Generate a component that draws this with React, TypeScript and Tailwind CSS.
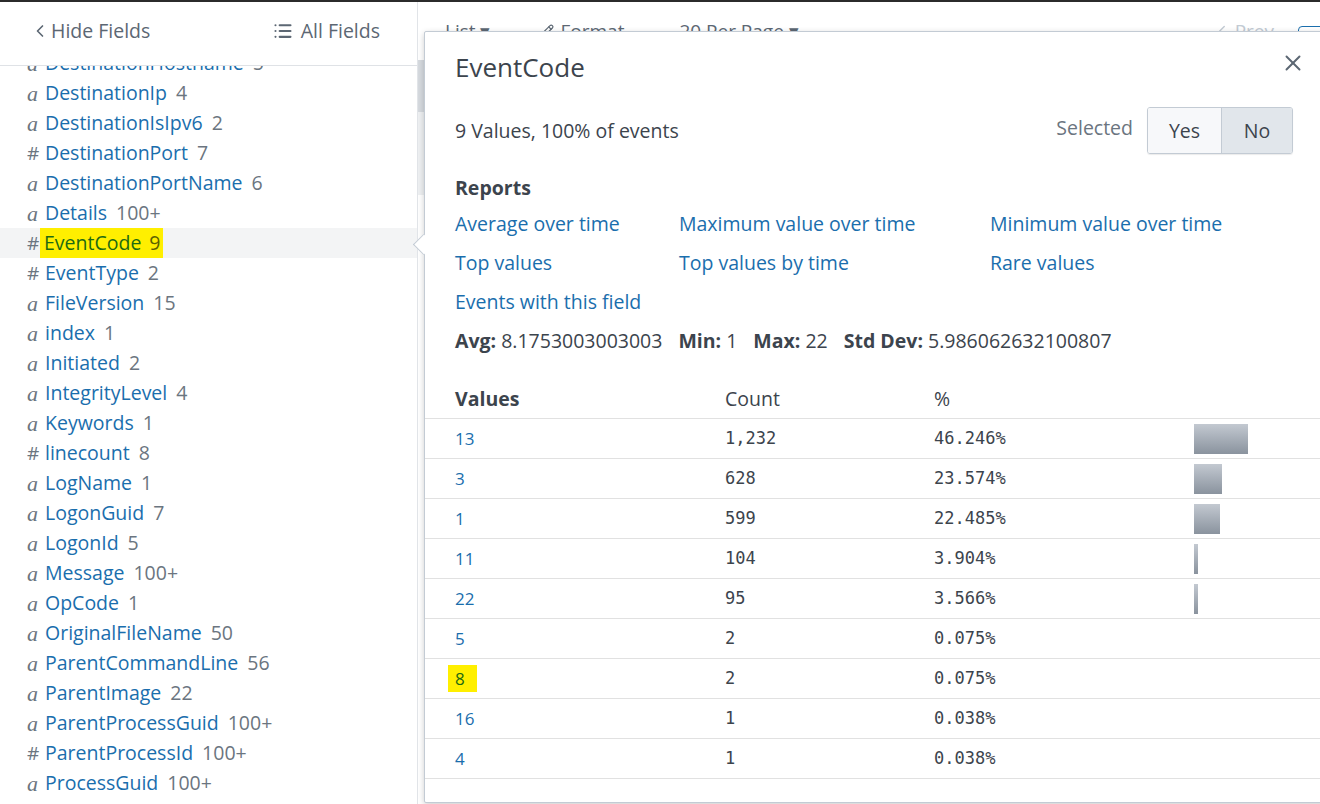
import React from 'react';
import { ChevronLeft, List, X, Pencil } from 'lucide-react';

type Field = { kind: 'a' | '#'; name: string; count: string; active?: boolean };

const fields: Field[] = [
  { kind: 'a', name: 'DestinationHostname', count: '5' },
  { kind: 'a', name: 'DestinationIp', count: '4' },
  { kind: 'a', name: 'DestinationIsIpv6', count: '2' },
  { kind: '#', name: 'DestinationPort', count: '7' },
  { kind: 'a', name: 'DestinationPortName', count: '6' },
  { kind: 'a', name: 'Details', count: '100+' },
  { kind: '#', name: 'EventCode', count: '9', active: true },
  { kind: '#', name: 'EventType', count: '2' },
  { kind: 'a', name: 'FileVersion', count: '15' },
  { kind: 'a', name: 'index', count: '1' },
  { kind: 'a', name: 'Initiated', count: '2' },
  { kind: 'a', name: 'IntegrityLevel', count: '4' },
  { kind: 'a', name: 'Keywords', count: '1' },
  { kind: '#', name: 'linecount', count: '8' },
  { kind: 'a', name: 'LogName', count: '1' },
  { kind: 'a', name: 'LogonGuid', count: '7' },
  { kind: 'a', name: 'LogonId', count: '5' },
  { kind: 'a', name: 'Message', count: '100+' },
  { kind: 'a', name: 'OpCode', count: '1' },
  { kind: 'a', name: 'OriginalFileName', count: '50' },
  { kind: 'a', name: 'ParentCommandLine', count: '56' },
  { kind: 'a', name: 'ParentImage', count: '22' },
  { kind: 'a', name: 'ParentProcessGuid', count: '100+' },
  { kind: '#', name: 'ParentProcessId', count: '100+' },
  { kind: 'a', name: 'ProcessGuid', count: '100+' },
];

const rows = [
  { v: '13', c: '1,232', p: '46.246%', bar: 54 },
  { v: '3', c: '628', p: '23.574%', bar: 28 },
  { v: '1', c: '599', p: '22.485%', bar: 26 },
  { v: '11', c: '104', p: '3.904%', bar: 4 },
  { v: '22', c: '95', p: '3.566%', bar: 4 },
  { v: '5', c: '2', p: '0.075%', bar: 0 },
  { v: '8', c: '2', p: '0.075%', bar: 0, mark: true },
  { v: '16', c: '1', p: '0.038%', bar: 0 },
  { v: '4', c: '1', p: '0.038%', bar: 0 },
];

const FieldRow = ({ f }: { f: Field }) => (
  <div className={`h-[30px] flex items-center pl-[27px] ${f.active ? 'bg-[#f3f4f5]' : ''}`}>
    <span
      className={`w-[18px] text-[#6b7580] ${
        f.kind === 'a' ? "italic font-['Liberation_Serif',serif] text-[22px]" : 'text-[19px]'
      }`}
    >
      {f.kind}
    </span>
    {f.active ? (
      <span className="bg-[#ffef00] pl-[4px] pr-[2px] -ml-[5px] flex items-center">
        <span className="text-[#1d6a12]">{f.name}</span>
        <span className="ml-[8px] text-[#5c6200]">{f.count}</span>
      </span>
    ) : (
      <>
        <span className="text-[#1a6ead]">{f.name}</span>
        <span className="ml-[9px] text-[#6b7580]">{f.count}</span>
      </>
    )}
  </div>
);

export default function App() {
  return (
    <div className="relative w-[1320px] h-[804px] overflow-hidden bg-white border-t-2 border-[#2b2b2b] flex font-['Open_Sans',sans-serif] text-[19.5px] text-[#3c444d]">
      {/* Field sidebar */}
      <div className="w-[418px] shrink-0 border-r border-[#e1e4e8] flex flex-col">
        <div className="h-[64px] shrink-0 border-b border-[#dfe2e6] flex items-center pb-[6px] pl-[30px] pr-[37px] justify-between text-[#5c6773] text-[19.5px] bg-white z-10">
          <span className="flex items-center gap-[1px]">
            <ChevronLeft className="w-[20px] h-[20px]" strokeWidth={2} />
            Hide Fields
          </span>
          <span className="flex items-center gap-[8px]">
            <List className="w-[20px] h-[20px]" strokeWidth={2.5} />
            All Fields
          </span>
        </div>
        <div className="-mt-[18px] text-[19.5px]">
          {fields.map((f) => (
            <FieldRow key={f.name} f={f} />
          ))}
        </div>
      </div>

      {/* Results area behind the popup */}
      <div className="flex-1 relative">
        <div className="h-[58px] flex items-center text-[19px] text-[#5c6773] pl-[27px]">
          <span>List ▾</span>
          <span className="ml-[50px] flex items-center gap-[6px]">
            <Pencil className="w-[14px] h-[14px]" /> Format
          </span>
          <span className="ml-[55px]">20 Per Page ▾</span>
          <span className="ml-auto text-[#c3cbd4] flex items-center gap-[4px]">
            <ChevronLeft className="w-[18px] h-[18px]" /> Prev
          </span>
          <span className="ml-[24px] w-[30px] h-[40px] border border-[#1a6ead] rounded-[4px] self-end -mb-[6px] -mr-[8px]" />
        </div>
        <div className="absolute left-0 top-[58px] w-[6px] h-[52px] bg-[#d6dadf]" />
        <div className="absolute left-0 top-[110px] w-[6px] h-[83px] bg-[#eef0f2]" />
      </div>

      {/* Field summary popup */}
      <div className="absolute left-[424px] top-[29px] w-[910px] h-[772px] bg-white border border-[#c3cbd4] shadow-[0_2px_6px_rgba(0,0,0,0.2)] rounded-[2px]">
        <div className="absolute -left-[9px] top-[205px] w-[15px] h-[15px] bg-white border-l border-b border-[#c3cbd4] rotate-45" />
        <div className="relative pl-[30px] pr-[40px]">
          <div className="flex items-center justify-between pt-[18px]">
            <span className="text-[26px] leading-[34px] text-[#3c444d]">EventCode</span>
            <X className="w-[26px] h-[26px] text-[#5c6773] -mr-[13px] -mt-[8px]" strokeWidth={1.8} />
          </div>
          <div className="flex items-center justify-between mt-[23px]">
            <span>9 Values, 100% of events</span>
            <div className="flex items-center">
              <span className="text-[#6b7580] mr-[14px] -mt-[6px]">Selected</span>
              <div className="flex border border-[#c3cbd4] rounded-[3px] overflow-hidden shadow-[0_1px_1px_rgba(0,0,0,0.08)] h-[47px]">
                <span className="w-[74px] flex items-center justify-center bg-[#f7f8fa] border-r border-[#c3cbd4]">Yes</span>
                <span className="w-[70px] flex items-center justify-center bg-[#e1e6eb]">No</span>
              </div>
            </div>
          </div>
          <div className="font-bold mt-[19px] leading-[30px]">Reports</div>
          <div className="grid grid-cols-[224px_311px_1fr] text-[#1a6ead] leading-[39px] mt-[1px]">
            <span>Average over time</span>
            <span>Maximum value over time</span>
            <span>Minimum value over time</span>
            <span>Top values</span>
            <span>Top values by time</span>
            <span>Rare values</span>
            <span>Events with this field</span>
          </div>
          <div className="leading-[39px] flex gap-[16px]">
            <span><b>Avg:</b> 8.1753003003003</span>
            <span><b>Min:</b> 1</span>
            <span><b>Max:</b> 22</span>
            <span><b>Std Dev:</b> 5.986062632100807</span>
          </div>
        </div>

        <div className="mt-[19px]">
          <div className="h-[40px] flex items-center pl-[30px] border-b border-[#e1e1e1]">
            <span className="w-[270px] font-bold">Values</span>
            <span className="w-[209px]">Count</span>
            <span>%</span>
          </div>
          {rows.map((r) => (
            <div key={r.v} className="h-[40px] flex items-center pl-[30px] border-b border-[#e1e1e1]">
              <span className="w-[270px] text-[17px]">
                <span className={r.mark ? 'bg-[#ffef00] text-[#1d6a12] pl-[7px] pr-[12px] -ml-[7px] py-[2px]' : 'text-[#1a6ead]'}>{r.v}</span>
              </span>
              <span className="w-[209px] font-['DejaVu_Sans_Mono',monospace] text-[17px]">{r.c}</span>
              <span className="w-[260px] font-['DejaVu_Sans_Mono',monospace] text-[17px]">{r.p}</span>
              {r.bar > 0 && (
                <span
                  className="h-[30px] bg-gradient-to-b from-[#c3c9d1] to-[#8a939e]"
                  style={{ width: r.bar }}
                />
              )}
            </div>
          ))}
        </div>
      </div>
    </div>
  );
}
